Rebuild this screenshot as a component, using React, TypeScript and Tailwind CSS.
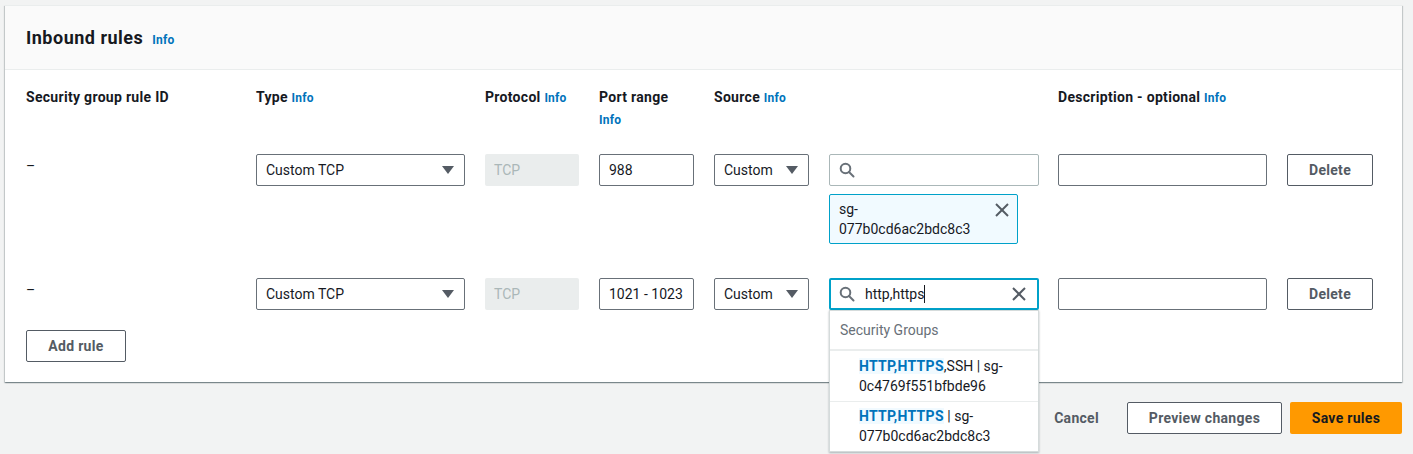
import React from "react";

const font = { fontFamily: "Roboto, 'Liberation Sans', sans-serif" };

function SearchIcon() {
  return (
    <svg width="16" height="16" viewBox="0 0 16 16" fill="none" stroke="#687078" strokeWidth="2">
      <circle cx="6.5" cy="6.5" r="4.8" />
      <line x1="10" y1="10" x2="14.5" y2="14.5" strokeLinecap="round" />
    </svg>
  );
}

function XIcon({ color = "#545b64" }: { color?: string }) {
  return (
    <svg width="16" height="16" viewBox="0 0 16 16" fill="none" stroke={color} strokeWidth="2">
      <line x1="2" y1="2" x2="14" y2="14" />
      <line x1="14" y1="2" x2="2" y2="14" />
    </svg>
  );
}

function Caret() {
  return (
    <svg width="12" height="10" viewBox="0 0 12 10">
      <polygon points="0,1 12,1 6,9" fill="#545b64" />
    </svg>
  );
}

function Select({ label, w }: { label: string; w: string }) {
  return (
    <div className={`${w} h-[32px] border border-[#687078] rounded-[2px] bg-white flex items-center justify-between pl-[9px] pr-[10px] text-[14px] text-[#16191f]`}>
      <span>{label}</span>
      <Caret />
    </div>
  );
}

function Info() {
  return <span className="text-[12px] font-bold text-[#0073bb] tracking-[0.2px]">Info</span>;
}

function Row({ port, second }: { port: string; second?: boolean }) {
  return (
    <>
      <div className="text-[14px] leading-[20px] text-[#16191f] pt-[2px]">–</div>
      <div>
        <Select label="Custom TCP" w="w-[209px]" />
      </div>
      <div>
        <div className="w-[94px] h-[32px] rounded-[2px] bg-[#eaeded] flex items-center pl-[9px] text-[14px] text-[#aab7b8]">TCP</div>
      </div>
      <div>
        <div className="w-[95px] h-[32px] border border-[#687078] rounded-[2px] bg-white flex items-center pl-[9px] text-[14px] text-[#16191f] overflow-hidden whitespace-nowrap">{port}</div>
      </div>
      <div>
        <Select label="Custom" w="w-[95px]" />
      </div>
      <div className="relative">
        {second ? (
          <>
            <div className="w-[210px] h-[32px] border-2 border-[#00a1c9] rounded-[2px] bg-white flex items-center pl-[8px] pr-[10px] text-[14px] text-[#16191f]">
              <SearchIcon />
              <span className="ml-[10px]">http,https</span>
              <span className="w-px h-[18px] bg-[#16191f]" />
              <span className="flex-1" />
              <XIcon />
            </div>
            <div className="absolute left-0 top-[32px] w-[210px] bg-white border border-[#d5dbdb] shadow-[0_1px_2px_rgba(0,28,36,0.3)] z-10 text-[14px]">
              <div className="h-[40px] flex items-center pl-[10px] text-[#687078] border-b-2 border-[#eaeded]">Security Groups</div>
              <div className="pl-[29px] py-[5px] leading-[20px] text-[#16191f] border-b border-[#eaeded]">
                <span className="bg-[#f1faff] text-[#0073bb] font-bold tracking-[0.3px]">HTTP,HTTPS</span>,SSH | sg-
                <br />
                0c4769f551bfbde96
              </div>
              <div className="pl-[29px] pt-[4px] pb-[5px] leading-[20px] text-[#16191f]">
                <span className="bg-[#f1faff] text-[#0073bb] font-bold tracking-[0.3px]">HTTP,HTTPS</span> | sg-
                <br />
                077b0cd6ac2bdc8c3
              </div>
            </div>
          </>
        ) : (
          <>
            <div className="w-[210px] h-[32px] border border-[#aab7b8] rounded-[2px] bg-white flex items-center pl-[9px]">
              <SearchIcon />
            </div>
            <div className="mt-[8px] w-[189px] h-[50px] border border-[#00a1c9] rounded-[2px] bg-[#f1faff] flex justify-between pl-[9px] pr-[7px] pt-[4px] text-[14px] leading-[20px] text-[#16191f]">
              <span>
                sg-
                <br />
                077b0cd6ac2bdc8c3
              </span>
              <span className="pt-[3px]">
                <XIcon />
              </span>
            </div>
          </>
        )}
      </div>
      <div>
        <div className="w-[209px] h-[32px] border border-[#687078] rounded-[2px] bg-white" />
      </div>
      <div>
        <div className="w-[86px] h-[32px] border border-[#545b64] rounded-[2px] bg-white flex items-center justify-center text-[14px] font-bold tracking-[0.3px] text-[#545b64]">Delete</div>
      </div>
    </>
  );
}

export default function App() {
  return (
    <div className="w-[1413px] h-[454px] bg-[#f2f3f3] pt-[5px] pl-[5px] overflow-hidden" style={font}>
      <div className="w-[1397px] bg-white shadow-[0_1px_1px_0_rgba(0,28,36,0.3),1px_1px_1px_0_rgba(0,28,36,0.15),-1px_1px_1px_0_rgba(0,28,36,0.15)] border-t border-[#eaeded]">
        <div className="h-[64px] bg-[#fafafa] border-b border-[#eaeded] flex items-center pl-[21px]">
          <span className="text-[18px] font-bold tracking-[0.5px] text-[#16191f]">Inbound rules</span>
          <span className="ml-[9px] mt-[3px]"><Info /></span>
        </div>
        <div className="pl-[21px] pt-[16px] pb-[20px]">
          <div className="grid grid-cols-[210px_209px_94px_95px_95px_209px_209px_86px] gap-x-[20px] text-[14px] font-bold tracking-[0.3px] leading-[22px] text-[#16191f]">
            <div>Security group rule ID</div>
            <div>Type <Info /></div>
            <div>Protocol <Info /></div>
            <div>Port range<br /><Info /></div>
            <div>Source <Info /></div>
            <div />
            <div>Description - optional <Info /></div>
            <div />
          </div>
          <div className="mt-[23px] grid grid-cols-[210px_209px_94px_95px_95px_209px_209px_86px] gap-x-[20px] items-start">
            <Row port="988" />
          </div>
          <div className="mt-[34px] grid grid-cols-[210px_209px_94px_95px_95px_209px_209px_86px] gap-x-[20px] items-start">
            <Row port="1021 - 1023" second />
          </div>
          <div className="mt-[20px] w-[100px] h-[32px] border border-[#545b64] rounded-[2px] bg-white flex items-center justify-center text-[14px] font-bold tracking-[0.3px] text-[#545b64]">Add rule</div>
        </div>
      </div>
      <div className="w-[1397px] mt-[20px] flex justify-end items-center gap-[8px] text-[14px] font-bold tracking-[0.3px]">
        <div className="h-[32px] px-[20px] flex items-center text-[#545b64]">Cancel</div>
        <div className="w-[155px] h-[32px] border border-[#545b64] rounded-[2px] bg-white flex items-center justify-center text-[#545b64]">Preview changes</div>
        <div className="w-[112px] h-[32px] rounded-[2px] bg-[#ff9900] flex items-center justify-center text-[#16191f]">Save rules</div>
      </div>
    </div>
  );
}
